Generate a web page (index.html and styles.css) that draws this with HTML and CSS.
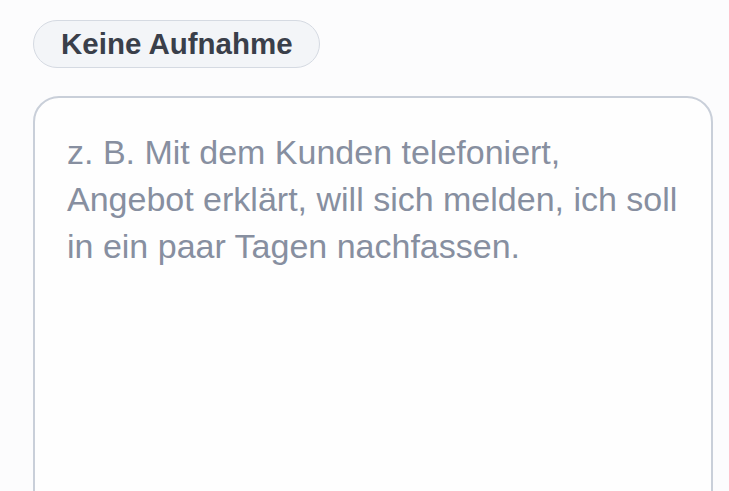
FILE: index.html
```html
<!DOCTYPE html>
<html lang="de">
<head>
  <meta charset="UTF-8">
  <meta name="viewport" content="width=device-width, initial-scale=1.0">
  <title>Notiz</title>
  <link rel="stylesheet" href="styles.css">
</head>
<body>

  <div class="page">
    <span class="status-pill">Keine Aufnahme</span>

    <div class="note-box">
      <p class="note-placeholder">z. B. Mit dem Kunden telefoniert, Angebot erklärt, will sich melden, ich soll in ein paar Tagen nachfassen.</p>
    </div>
  </div>

</body>
</html>
```

FILE: styles.css
```css
body {
  font-family: "Liberation Sans", Arial, sans-serif;
  margin: 0;
  padding: 0;
  height: 100vh;
  overflow: hidden;
  background: #fcfcfd;
}

.page {
  padding: 20px 16px 0 33px;
  display: flex;
  flex-direction: column;
  align-items: flex-start;
  gap: 28px;
}

/* Status */
.status-pill {
  display: inline-block;
  box-sizing: border-box;
  width: 287px;
  height: 48px;
  line-height: 46px;
  padding-left: 27px;
  font-size: 29.5px;
  font-weight: bold;
  color: #3a3f4a;
  background: #f3f5f8;
  border: 1px solid #d5dae2;
  border-radius: 24px;
  white-space: nowrap;
}

/* Notizfeld */
.note-box {
  box-sizing: border-box;
  align-self: stretch;
  height: 420px;
  background: #fefefe;
  border: 2px solid #c9cfd9;
  border-radius: 26px;
  padding: 31px 28px 0 32px;
}

.note-placeholder {
  margin: 0;
  font-size: 34px;
  line-height: 47px;
  color: #878fa0;
}
```
